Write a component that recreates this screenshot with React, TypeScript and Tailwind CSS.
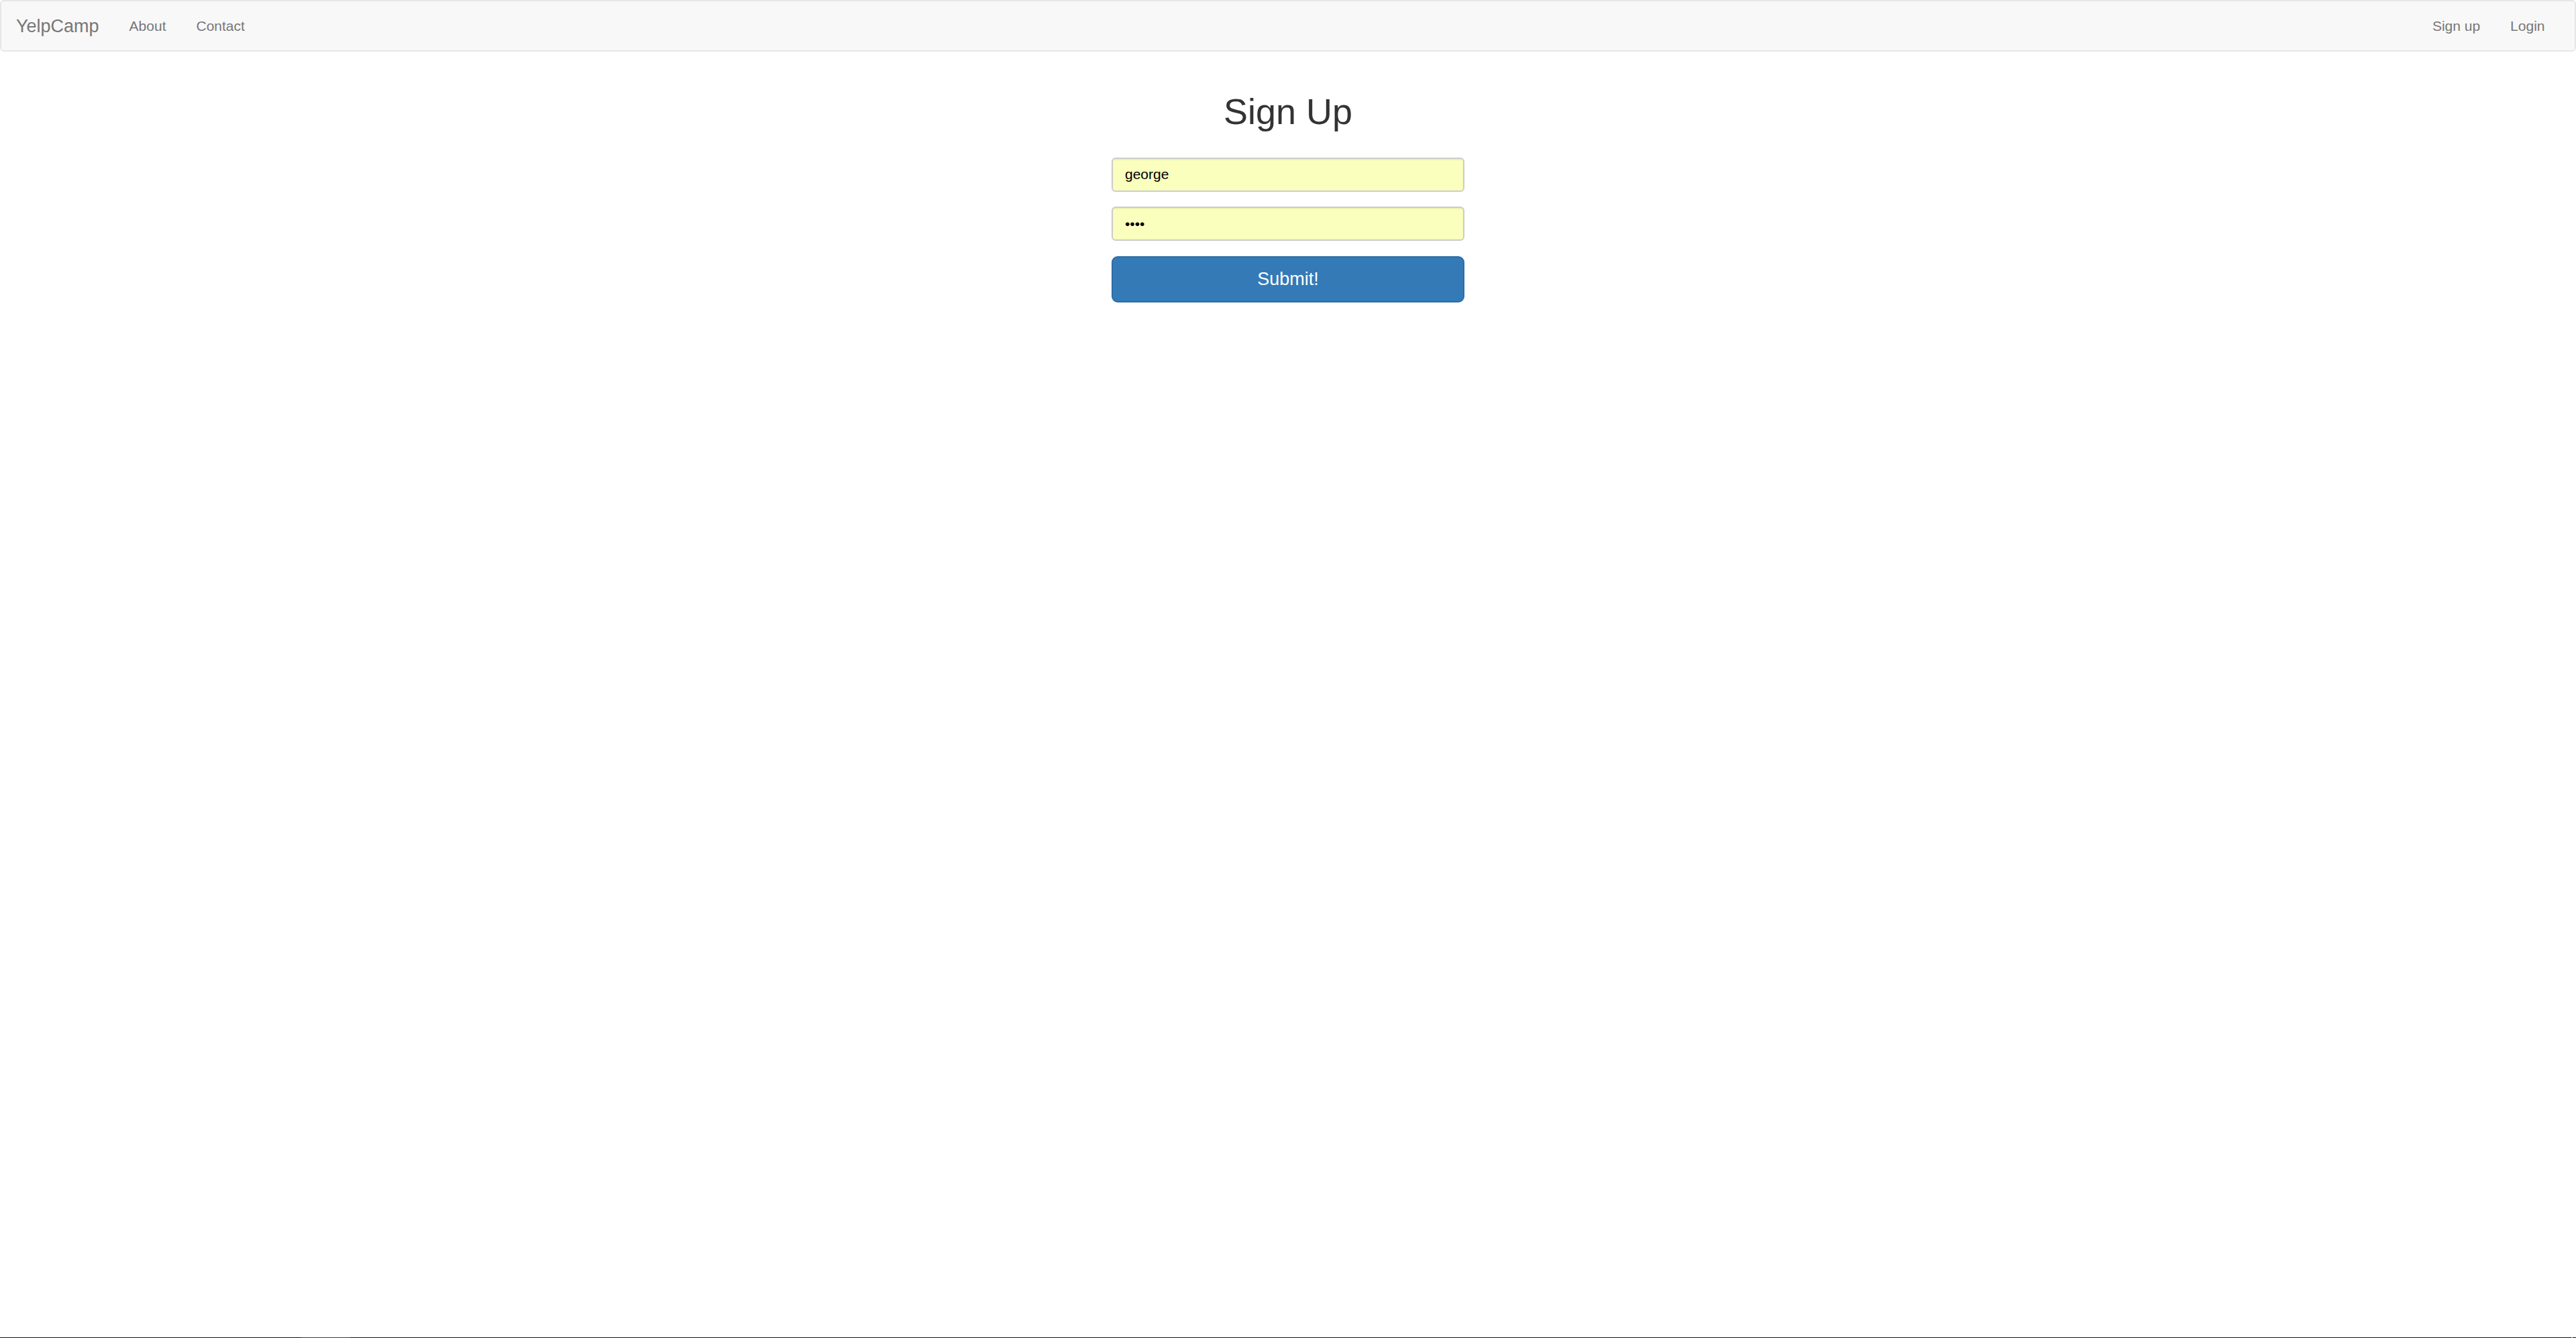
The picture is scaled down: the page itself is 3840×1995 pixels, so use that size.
const navLink = 'px-[22.5px] text-[21px] leading-[30px] text-[#777] hover:text-[#333]';

const inputClass =
  'block h-[51px] w-full rounded-[6px] border-2 border-[#cccccc] bg-[#faffbd] px-[18px] text-[21px] text-black shadow-[inset_0_1.5px_1.5px_rgba(0,0,0,0.075)] outline-none';

const Navbar = () => (
  <nav className="flex h-[77px] items-center rounded-[6px] border-2 border-[#e7e7e7] bg-[#f8f8f8] pr-[22px]">
    <a href="#" className="pl-[22px] pr-[22.5px] text-[27px] leading-[30px] text-[#777]">
      YelpCamp
    </a>
    <ul className="flex items-center">
      <li>
        <a href="#" className={navLink}>About</a>
      </li>
      <li>
        <a href="#" className={navLink}>Contact</a>
      </li>
    </ul>
    <ul className="ml-auto flex items-center">
      <li>
        <a href="#" className={navLink}>Sign up</a>
      </li>
      <li>
        <a href="#" className={navLink}>Login</a>
      </li>
    </ul>
  </nav>
);

const App = () => {
  return (
    <div className="flex min-h-[1995px] flex-col bg-white font-['Liberation_Sans',Arial,sans-serif] text-[#333]">
      <Navbar />

      <main className="flex-1">
        <h1 className="mt-[60px] text-center text-[54px] font-normal leading-[59.4px] text-[#333]">
          Sign Up
        </h1>

        <form className="mx-auto mt-[38.5px] w-[526px]" onSubmit={(e) => e.preventDefault()}>
          <div className="mb-[22.5px]">
            <input type="text" name="username" className={inputClass} value="george" readOnly />
          </div>
          <div className="mb-[22.5px]">
            <input type="password" name="password" className={inputClass} value="abcd" readOnly />
          </div>
          <button
            type="submit"
            className="block h-[69px] w-full rounded-[9px] border-2 border-[#2e6da4] bg-[#337ab7] text-[27px] leading-[36px] text-white"
          >
            Submit!
          </button>
        </form>
      </main>

      {/* bottom edge strip */}
      <div className="flex h-px">
        <div className="w-[449px] bg-[#111]" />
        <div className="w-[73px] bg-[#3a3a3a]" />
        <div className="flex-1 bg-[#111]" />
        <div className="w-[2px] bg-[#999]" />
        <div className="w-[5px] bg-[#111]" />
      </div>
    </div>
  );
};

export default App;
